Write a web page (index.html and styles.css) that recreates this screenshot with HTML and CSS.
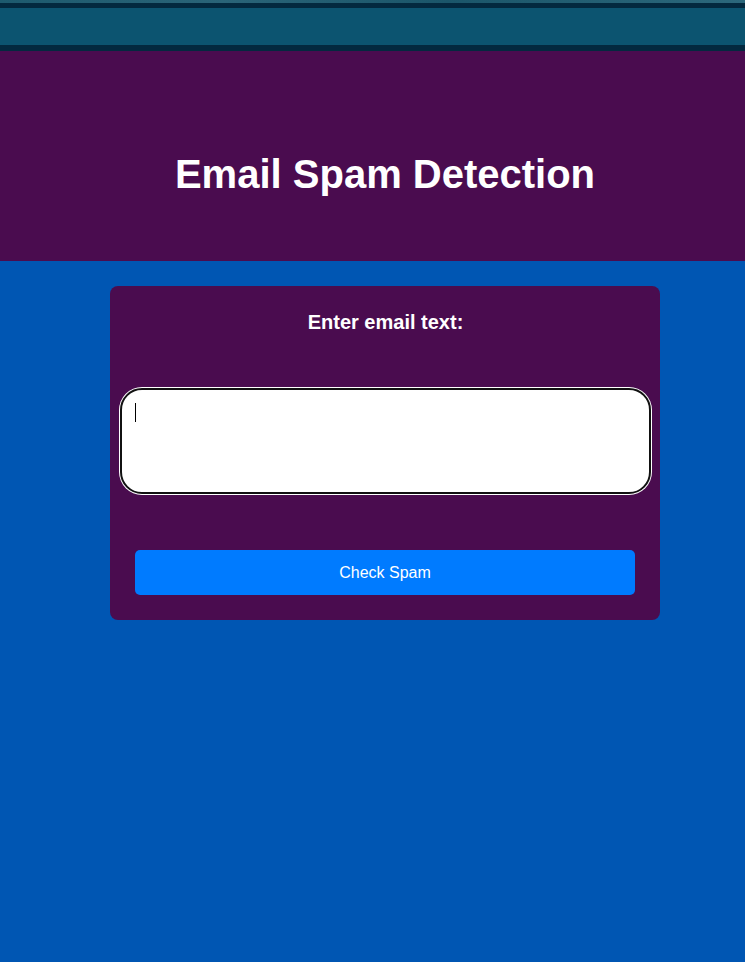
FILE: index.html
```html
<!DOCTYPE html>
<html>
<head>
<meta charset="utf-8">
<link rel="stylesheet" href="styles.css">
</head>
<body>
<div class="topbar">
  <div class="topbar-texture"></div>
  <div class="topbar-dark"></div>
  <div class="topbar-main"></div>
  <div class="topbar-dark bottom"></div>
</div>
<div class="page">
  <header class="hero">
    <h1 class="hero-title">Email Spam Detection</h1>
  </header>
  <main class="content">
    <form class="card">
      <label class="card-label" for="email">Enter email text:</label>
      <div class="input-wrap">
        <textarea id="email" class="email-input"></textarea>
        <span class="caret"></span>
      </div>
      <button type="button" class="check-btn">Check Spam</button>
    </form>
  </main>
</div>
</body>
</html>
```
FILE: styles.css
```css
html, body {
  margin: 0;
  padding: 0;
  background: #0056b3;
  font-family: "Liberation Sans", Arial, sans-serif;
  overflow: hidden;
}
.topbar {
  display: flex;
  flex-direction: column;
  height: 51px;
}
.topbar-texture {
  height: 3px;
  background: linear-gradient(90deg, #1d5a6e, #2a6478 30%, #1b566a 60%, #2c687c);
}
.topbar-dark {
  height: 5px;
  background: #03293f;
}
.topbar-dark.bottom {
  height: 6px;
}
.topbar-main {
  height: 37px;
  background: #0c5470;
}
.page {
  padding-left: 25px;
}
.hero {
  margin-left: -25px;
  padding: 100px 0 64px 25px;
  background: #4a0c4f;
  text-align: center;
}
.hero-title {
  margin: 0;
  color: #fff;
  font-size: 40px;
  line-height: 46px;
  font-weight: bold;
}
.content {
  display: flex;
  justify-content: center;
  padding-top: 25px;
}
.card {
  width: 550px;
  box-sizing: border-box;
  background: #4a0c4f;
  border-radius: 8px;
  padding: 25px 9px 25px 10px;
  display: flex;
  flex-direction: column;
  align-items: center;
}
.card-label {
  color: #fff;
  font-weight: bold;
  font-size: 20px;
  line-height: 23px;
}
.input-wrap {
  position: relative;
  margin-top: 54px;
  width: 531px;
  height: 106px;
}
.email-input {
  display: block;
  width: 100%;
  height: 100%;
  margin: 0;
  box-sizing: border-box;
  border: 2px solid #111;
  box-shadow: 0 0 0 1px #fff;
  border-radius: 22px;
  background: #fff;
  resize: none;
  outline: none;
  padding: 12px 13px;
  font-family: "Liberation Sans", Arial, sans-serif;
  font-size: 16px;
}
.caret {
  position: absolute;
  left: 15px;
  top: 15px;
  width: 1px;
  height: 19px;
  background: #000;
}
.check-btn {
  align-self: flex-start;
  margin: 56px 0 0 15px;
  width: 500px;
  height: 45px;
  border: none;
  border-radius: 5px;
  background: #007bff;
  color: #fff;
  font-family: "Liberation Sans", Arial, sans-serif;
  font-size: 16px;
  cursor: pointer;
}
```
